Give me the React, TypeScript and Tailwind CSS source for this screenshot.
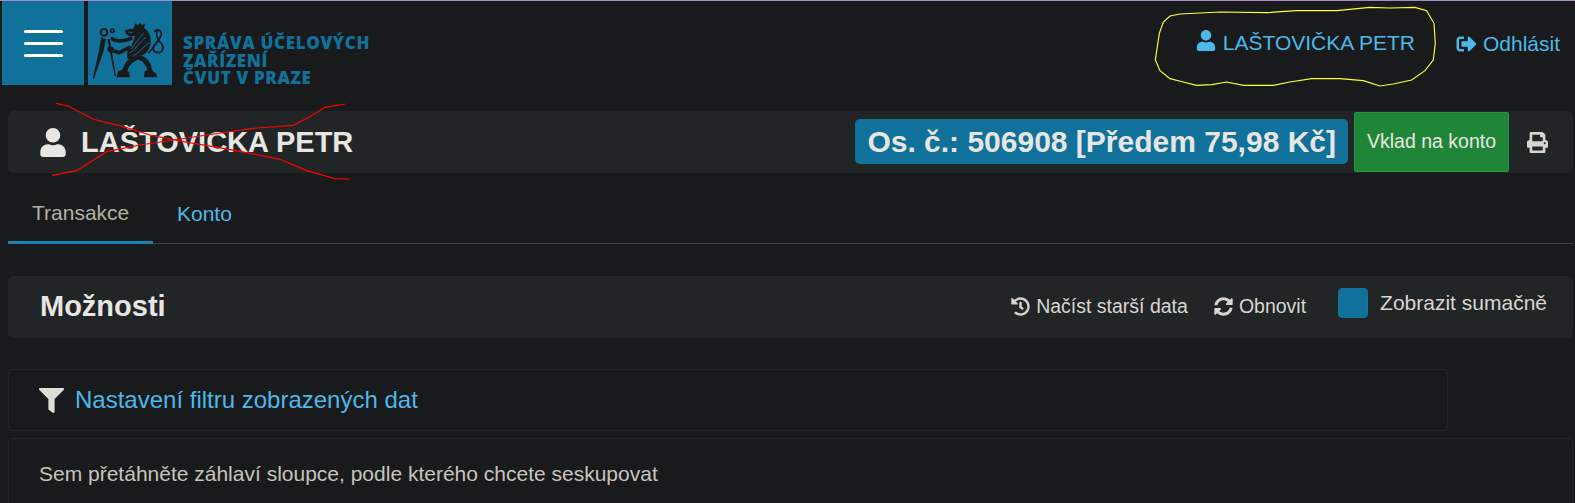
import { FaFilter, FaHistory, FaPrint, FaSignOutAlt, FaSyncAlt, FaUser } from 'react-icons/fa'

function LionLogo() {
  return (
    <svg viewBox="24 3 252 252" className="w-[84px] h-[84px] bg-[#10719a] shrink-0">
      <g fill="#181a1b" stroke="none">
        {/* compass legs */}
        <path d="M64 112 L78 118 L70 156 L42 236 L38 236 L56 156 Z" />
        <path d="M82 118 L89 116 L108 228 L104 228 Z" />
        {/* head, crown and mane */}
        <path d="M134 92 L150 86 L160 88 L166 70 L173 76 L180 68 L187 76 L196 70 L192 84 C206 92 213 108 212 128 C211 150 196 166 172 170 L150 164 L156 132 L166 108 L150 110 L138 102 Z" />
        {/* feet */}
        <path d="M110 232 L114 214 L130 208 L148 216 L150 232 Z" />
        <path d="M192 232 L194 214 L210 208 L228 220 L232 232 Z" />
      </g>
      <g fill="none" stroke="#181a1b" strokeLinecap="round" strokeLinejoin="round">
        <circle cx="72" cy="97" r="10" strokeWidth="6" />
        <circle cx="97" cy="92" r="5" strokeWidth="5" />
        {/* arms */}
        <path d="M96 116 C112 128 132 122 152 116" strokeWidth="11" />
        <path d="M92 150 L118 158 L148 142" strokeWidth="11" />
        <circle cx="92" cy="148" r="5" strokeWidth="9" />
        {/* body and hind legs */}
        <path d="M152 150 L150 170" strokeWidth="18" />
        <path d="M164 176 C150 182 140 192 134 212" strokeWidth="15" />
        <path d="M176 172 C196 176 206 190 210 212" strokeWidth="15" />
        {/* tail */}
        <path d="M206 158 C216 150 222 140 234 122 C244 108 248 100 240 92 C234 88 228 90 224 94" strokeWidth="5" />
        <path d="M232 92 C226 108 232 120 244 130 C254 142 248 158 234 158 C220 158 214 144 226 132" strokeWidth="5" />
      </g>
      <g fill="none" stroke="#10719a" strokeWidth="3" strokeLinecap="round">
        <path d="M146 96 L156 98" />
        <path d="M150 158 C168 150 176 126 198 112" />
        <path d="M154 146 C166 136 174 116 190 100" />
        <path d="M162 166 C180 158 190 138 208 128" />
      </g>
    </svg>
  )
}

function Scribbles() {
  return (
    <svg viewBox="0 0 1575 503" className="absolute left-0 top-0 w-[1575px] h-[503px] pointer-events-none">
      <g transform="scale(0.3333)" fill="none" stroke="#ff0000" strokeWidth="3.5">
        <path d="M168 310 L205 318 L280 358 L370 380 L450 405 L550 425 L640 440 L740 458 L840 478 L920 512 L1005 536 L1047 537" />
        <path d="M156 526 L230 512 L320 455 L420 435 L520 420 L620 405 L760 385 L880 376 L930 350 L975 322 L1035 312" />
      </g>
      <g transform="translate(1130 0) scale(0.3333)" fill="none" stroke="#ffff33" strokeWidth="3.5">
        <path d="M150 42 L120 48 L100 66 L88 100 L82 140 L76 180 L90 212 L120 236 L160 246 L200 256 L245 254 L290 246 L340 256 L430 256 L480 246 L545 236 L630 236 L700 242 L750 258 L790 252 L845 240 L885 212 L910 180 L916 130 L912 70 L890 32 L855 22 L780 24 L720 22 L620 32 L500 32 L410 38 L270 36 Z" />
      </g>
    </svg>
  )
}

export default function App() {
  return (
    <div className="relative w-[1575px] h-[503px] overflow-hidden bg-[#181a1b] text-[#e8e6e3] font-['Liberation_Sans',sans-serif]">
      <div className="h-px bg-[#a58bc9]" />

      <header className="flex items-start pl-[2px] h-[84px]">
        <button className="w-[82px] h-[84px] bg-[#10719a] flex flex-col items-center justify-center gap-[9px]">
          <span className="block w-[39px] h-[3px] rounded-full bg-white" />
          <span className="block w-[39px] h-[3px] rounded-full bg-white" />
          <span className="block w-[39px] h-[3px] rounded-full bg-white" />
        </button>
        <div className="ml-[4px]">
          <LionLogo />
        </div>
        <div className="ml-[11px] mt-[33px] font-['Open_Sans',sans-serif] font-extrabold text-[17px] leading-[17.5px] tracking-[0.65px] text-[#10719a]">
          <div>SPRÁVA ÚČELOVÝCH</div>
          <div>ZAŘÍZENÍ</div>
          <div>ČVUT V PRAZE</div>
        </div>
        <nav className="ml-auto flex items-center h-[84px] text-[21px] text-[#4cb9ea]">
          <a className="flex items-center">
            <FaUser className="w-[22px] h-[21px] mt-[-5px]" />
            <span className="ml-[6px]">LAŠTOVIČKA PETR</span>
          </a>
          <a className="flex items-center ml-[41px] mr-[15px] mt-[2px]">
            <FaSignOutAlt className="w-[21px] h-[20px]" />
            <span className="ml-[6px]">Odhlásit</span>
          </a>
        </nav>
      </header>

      <main className="px-[8px] pr-[2px]">
        <section className="mt-[26px] h-[62px] rounded-[5px] bg-[#212526] flex items-center">
          <FaUser className="ml-[32px] w-[26px] h-[29px] text-[#e8e6e3]" />
          <h1 className="ml-[15px] mt-[1px] text-[29px] font-bold">LAŠTOVICKA PETR</h1>
          <div className="ml-auto h-[45px] px-[12px] rounded-[5px] bg-[#10719a] flex items-center text-[30px] font-bold mt-[-2px]">
            Os. č.: 506908 [Předem 75,98 Kč]
          </div>
          <button className="ml-[6px] w-[155px] h-[60px] rounded-[2px] bg-[#208637] border border-[#23983f] text-[19.5px]">
            Vklad na konto
          </button>
          <FaPrint className="ml-[18px] mr-[25px] w-[21px] h-[21px] text-[#d8d5d0]" />
        </section>

        <nav className="mt-[10px] h-[61px] border-b border-[#3c4042] flex text-[21px]">
          <a className="w-[145px] h-[61px] border-b-[3px] border-[#1484b4] flex items-center pl-[24px] pt-[2px] text-[#b5afa6]">
            Transakce
          </a>
          <a className="ml-[24px] h-[60px] flex items-center pt-[1px] text-[#4cb9ea]">Konto</a>
        </nav>

        <section className="mt-[32px] h-[62px] rounded-[5px] bg-[#212526] flex items-center text-[#d8d5d0]">
          <h2 className="ml-[32px] text-[29px] font-bold text-[#e8e6e3]">Možnosti</h2>
          <a className="ml-auto flex items-center text-[19.5px] mt-[-1px]">
            <FaHistory className="w-[19px] h-[19px]" />
            <span className="ml-[6px]">Načíst starší data</span>
          </a>
          <a className="ml-[26px] flex items-center text-[19.5px] mt-[-1px]">
            <FaSyncAlt className="w-[19px] h-[19px]" />
            <span className="ml-[6px]">Obnovit</span>
          </a>
          <label className="ml-[32px] mr-[26px] flex items-center text-[21px] mt-[-8px]">
            <span className="block w-[30px] h-[30px] rounded-[4px] bg-[#10719a] border border-[#14749c]" />
            <span className="ml-[12px] mt-[-1px]">Zobrazit sumačně</span>
          </label>
        </section>

        <section className="mt-[31px] w-[1440px] h-[62px] rounded-[5px] border border-[#25282a] flex items-center">
          <FaFilter className="ml-[30px] w-[25px] h-[25px] text-[#e0ddd8]" />
          <span className="ml-[11px] text-[24px] text-[#4cb9ea]">Nastavení filtru zobrazených dat</span>
        </section>

        <section className="mt-[7px] h-[90px] rounded-t-[5px] border border-[#25282a] pl-[30px] pt-[19px] text-[21px] text-[#c8c3bc]">
          Sem přetáhněte záhlaví sloupce, podle kterého chcete seskupovat
        </section>
      </main>

      <Scribbles />
    </div>
  )
}
